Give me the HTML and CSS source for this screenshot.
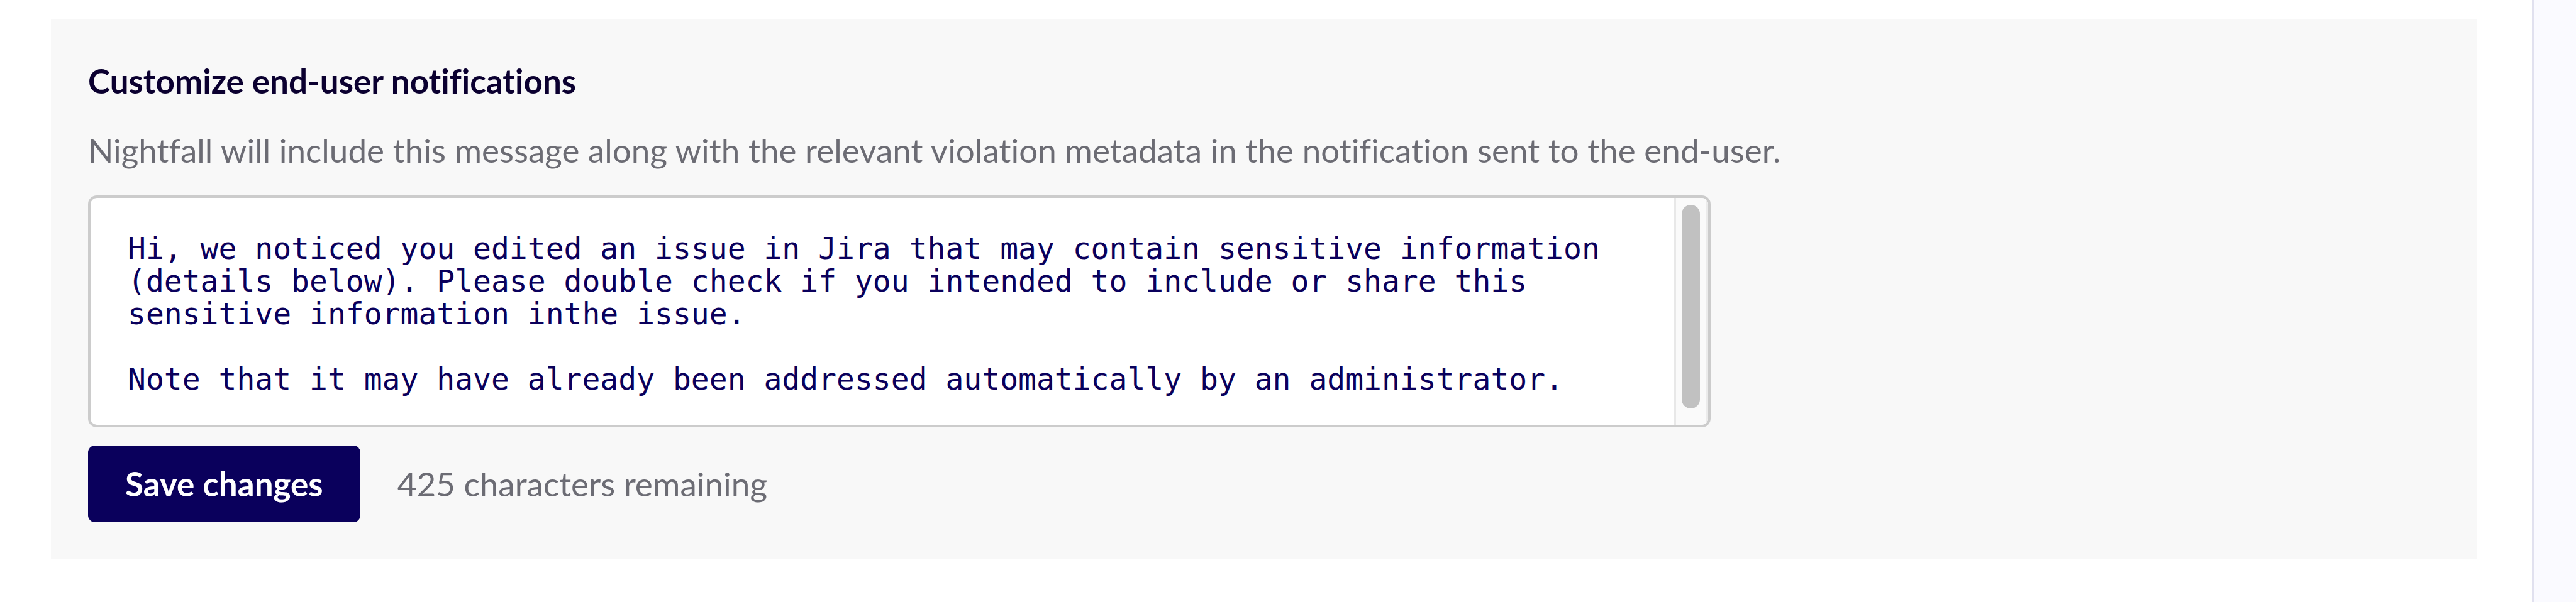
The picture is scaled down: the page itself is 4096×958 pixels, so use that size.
FILE: index.html
```html
<!DOCTYPE html>
<html lang="en">
<head>
<meta charset="utf-8">
<title>Customize end-user notifications</title>
<link rel="stylesheet" href="styles.css">
</head>
<body>
<div class="page">
  <main class="content">
    <form class="panel">
      <h2 class="title"><label for="message">Customize end-user notifications</label></h2>
      <p class="description" id="message-help">Nightfall will include this message along with the relevant violation metadata in the notification sent to the end-user.</p>
      <div class="editor">
        <textarea class="message" id="message" aria-describedby="message-help" spellcheck="false">Hi, we noticed you edited an issue in Jira that may contain sensitive information (details below). Please double check if you intended to include or share this sensitive information inthe issue.

Note that it may have already been addressed automatically by an administrator.</textarea>
        <div class="track" aria-hidden="true"><div class="thumb"></div></div>
      </div>
      <div class="actions">
        <button class="save" type="button">Save changes</button>
        <span class="remaining">425 characters remaining</span>
      </div>
    </form>
  </main>
  <aside class="gutter"></aside>
</div>
</body>
</html>
```
FILE: styles.css
```css
* {
  box-sizing: border-box;
}

body {
  margin: 0;
  background: #fff;
  color: #6c6c74;
  font-family: Lato, "Open Sans", sans-serif;
  font-size: 53px;
  font-variant-ligatures: none;
  line-height: 60px;
}

.page {
  display: flex;
  min-height: 100vh;
}

.content {
  flex: 1;
  padding: 31px 88px 0 81px;
}

.gutter {
  width: 70px;
  border-left: 4px solid #e1e1ef;
  background: #fafaff;
}

.panel {
  padding: 68px 59px 59px;
  background: #f8f8f8;
}

.title {
  margin: 0 0 50px;
  color: #0b0030;
  font-size: 53px;
  font-weight: 700;
}

.description {
  margin: 0 0 42px;
}

.editor {
  display: flex;
  width: 69%;
  height: 369px;
  border: 4px solid #ccc;
  border-radius: 14px;
  background: #fff;
  overflow: hidden;
}

.message {
  flex: 1;
  padding: 54px 59px 0;
  border: 0;
  outline: 0;
  background: transparent;
  color: #0a005c;
  font-family: "DejaVu Sans Mono", monospace;
  font-size: 48px;
  line-height: 52px;
  resize: none;
  scrollbar-width: none;
}

.track {
  display: flex;
  justify-content: center;
  width: 55px;
  padding: 11px 0 26px;
  border-right: 4px solid #ebebeb;
  border-left: 4px solid #e8e8e8;
  background: #fafafa;
}

.thumb {
  width: 29px;
  border-radius: 15px;
  background: #c1c1c1;
}

.actions {
  display: flex;
  align-items: center;
  gap: 59px;
  margin-top: 29px;
}

.save {
  height: 122px;
  padding: 0 59px;
  border: 0;
  border-radius: 11px;
  background: #0a005c;
  color: #fff;
  font: inherit;
  font-weight: 700;
}
```
